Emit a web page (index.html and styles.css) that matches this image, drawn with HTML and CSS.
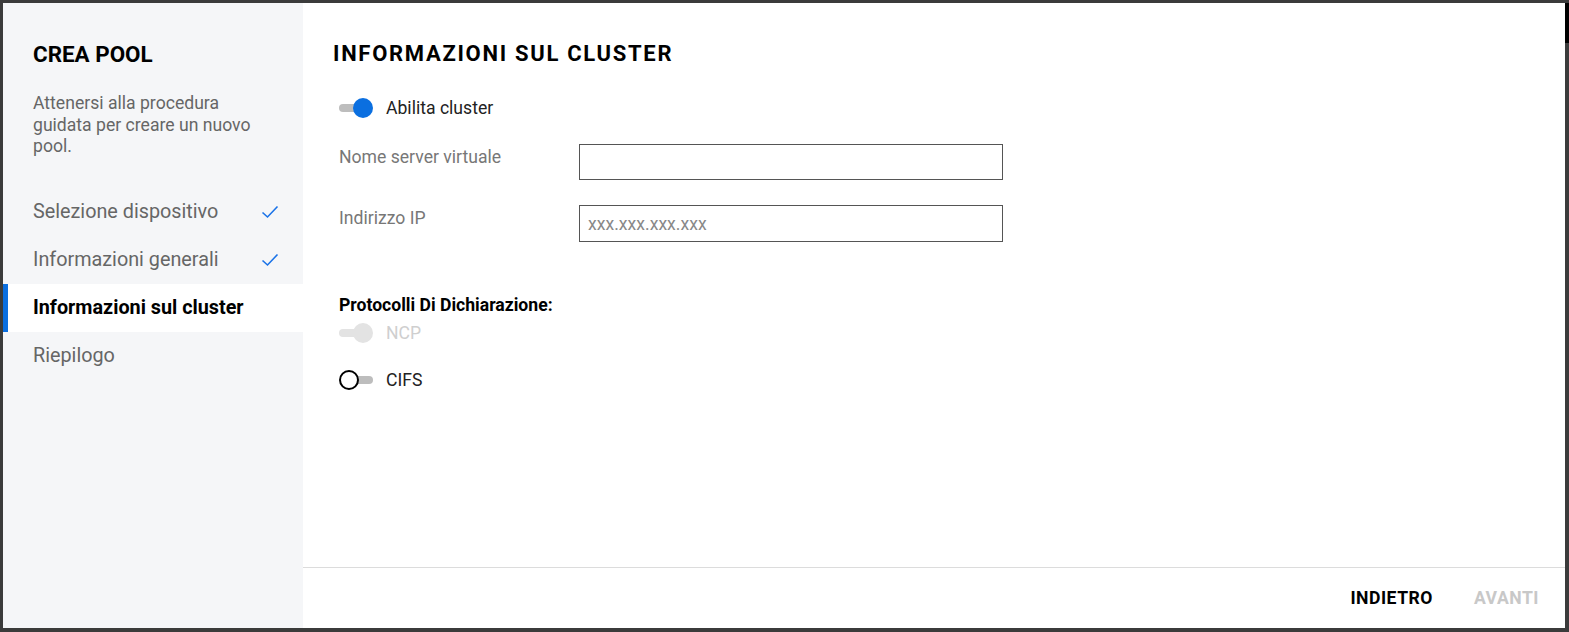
FILE: index.html
```html
<!DOCTYPE html>
<html lang="it">
<head>
<meta charset="utf-8">
<title>Crea pool</title>
<link rel="stylesheet" href="styles.css">
</head>
<body>
<div class="scroll-thumb"></div>
<div class="dialog">
  <aside class="sidebar">
    <h1 class="side-title">CREA POOL</h1>
    <p class="side-desc">Attenersi alla procedura guidata per creare un nuovo pool.</p>
    <nav class="steps">
      <div class="step done"><span>Selezione dispositivo</span>
        <svg class="check" viewBox="0 0 18 14" width="18" height="14"><path d="M1.5 7.5 L6.5 12 L16.5 1.5" fill="none" stroke="#1a73e8" stroke-width="1.6"/></svg>
      </div>
      <div class="step done"><span>Informazioni generali</span>
        <svg class="check" viewBox="0 0 18 14" width="18" height="14"><path d="M1.5 7.5 L6.5 12 L16.5 1.5" fill="none" stroke="#1a73e8" stroke-width="1.6"/></svg>
      </div>
      <div class="step active"><span>Informazioni sul cluster</span></div>
      <div class="step"><span>Riepilogo</span></div>
    </nav>
  </aside>
  <main class="main">
    <div class="content">
      <h2 class="main-title">INFORMAZIONI SUL CLUSTER</h2>
      <div class="toggle-row first">
        <span class="toggle on"><span class="track"></span><span class="thumb"></span></span>
        <span class="toggle-label">Abilita cluster</span>
      </div>
      <div class="form-row row1">
        <label class="field-label">Nome server virtuale</label>
        <div class="input"></div>
      </div>
      <div class="form-row row2">
        <label class="field-label">Indirizzo IP</label>
        <div class="input"><span class="placeholder">xxx.xxx.xxx.xxx</span></div>
      </div>
      <div class="section-head">Protocolli Di Dichiarazione:</div>
      <div class="toggle-row ncp">
        <span class="toggle disabled"><span class="track"></span><span class="thumb"></span></span>
        <span class="toggle-label muted">NCP</span>
      </div>
      <div class="toggle-row cifs">
        <span class="toggle off"><span class="track"></span><span class="thumb"></span></span>
        <span class="toggle-label">CIFS</span>
      </div>
    </div>
    <footer class="footer">
      <button class="btn">INDIETRO</button>
      <button class="btn disabled">AVANTI</button>
    </footer>
  </main>
</div>
</body>
</html>
```

FILE: styles.css
```css
* { box-sizing: border-box; }
html, body { margin: 0; height: 100%; }
body {
  background: #3b3b3b;
  padding: 3px 4px 4px 3px;
  font-family: Roboto, "Noto Sans", "Liberation Sans", sans-serif;
  overflow: hidden;
}
.scroll-thumb {
  position: absolute;
  right: 0;
  top: 3px;
  width: 4px;
  height: 40px;
  background: #000;
}
.dialog {
  display: flex;
  width: 1562px;
  height: 625px;
  background: #fff;
}
.sidebar {
  width: 300px;
  flex: none;
  background: #f5f6f8;
  padding-top: 37px;
}
.side-title {
  margin: 0 0 0 30px;
  font-size: 22.4px;
  line-height: 28px;
  font-weight: 700;
  color: #000;
}
.side-desc {
  margin: 25px 30px 0 30px;
  font-size: 17.6px;
  line-height: 21.5px;
  color: #666;
}
.steps {
  margin-top: 30px;
  display: flex;
  flex-direction: column;
}
.step {
  height: 48px;
  display: flex;
  align-items: center;
  justify-content: space-between;
  padding: 0 24px 0 30px;
  font-size: 19.8px;
  color: #666;
}
.step.active {
  background: #fff;
  color: #000;
  font-weight: 700;
  border-left: 5px solid #0b6fe0;
  padding-left: 25px;
}
.check { display: block; }
.main {
  flex: 1;
  display: flex;
  flex-direction: column;
}
.content {
  flex: 1;
  padding: 37px 0 0 30px;
}
.main-title {
  margin: 0;
  font-size: 22px;
  line-height: 28px;
  font-weight: 700;
  letter-spacing: 1.7px;
  color: #000;
}
.toggle-row {
  display: flex;
  align-items: center;
  height: 24px;
  padding-left: 6px;
}
.toggle-row.first { margin-top: 28px; }
.toggle-row.ncp { margin-top: 6px; }
.toggle-row.cifs { margin-top: 23px; }
.toggle {
  position: relative;
  width: 34px;
  height: 20px;
  margin-right: 13px;
  flex: none;
}
.toggle .track {
  position: absolute;
  left: 0;
  top: 6px;
  width: 32px;
  height: 8px;
  border-radius: 4px;
  background: #bdbdbd;
}
.toggle .thumb {
  position: absolute;
  top: 0;
  width: 20px;
  height: 20px;
  border-radius: 50%;
}
.toggle.on .thumb { left: 14px; background: #0b6fe0; }
.toggle.disabled .track { background: #e3e3e3; }
.toggle.disabled .thumb { left: 14px; background: #e3e3e3; }
.toggle.off .thumb { left: 0; background: #fff; border: 2px solid #000; }
.toggle.off .track { left: 6px; width: 28px; }
.toggle-label {
  font-size: 17.6px;
  color: #222;
}
.toggle-label.muted { color: #cfcfcf; }
.form-row {
  display: flex;
  align-items: flex-start;
  padding-left: 6px;
}
.form-row.row1 { margin-top: 24px; }
.form-row.row2 { margin-top: 25px; }
.field-label {
  width: 240px;
  flex: none;
  padding-top: 3px;
  font-size: 17.6px;
  line-height: 20px;
  color: #777;
}
.input {
  width: 424px;
  height: 36px;
  border: 1px solid #555;
  display: flex;
  align-items: center;
  padding-left: 8px;
}
.form-row.row2 .input { height: 37px; }
.placeholder {
  font-size: 17.6px;
  color: #888;
}
.section-head {
  margin-top: 53px;
  padding-left: 6px;
  font-size: 17.6px;
  line-height: 20px;
  font-weight: 700;
  color: #000;
}
.footer {
  height: 61px;
  flex: none;
  border-top: 1px solid #dcdcdc;
  display: flex;
  align-items: center;
  justify-content: flex-end;
  padding-right: 26px;
  gap: 41px;
}
.btn {
  border: 0;
  background: none;
  padding: 0;
  font-family: inherit;
  font-size: 17.6px;
  font-weight: 700;
  letter-spacing: 0.5px;
  color: #000;
}
.btn.disabled { color: #c8c8c8; }
```
